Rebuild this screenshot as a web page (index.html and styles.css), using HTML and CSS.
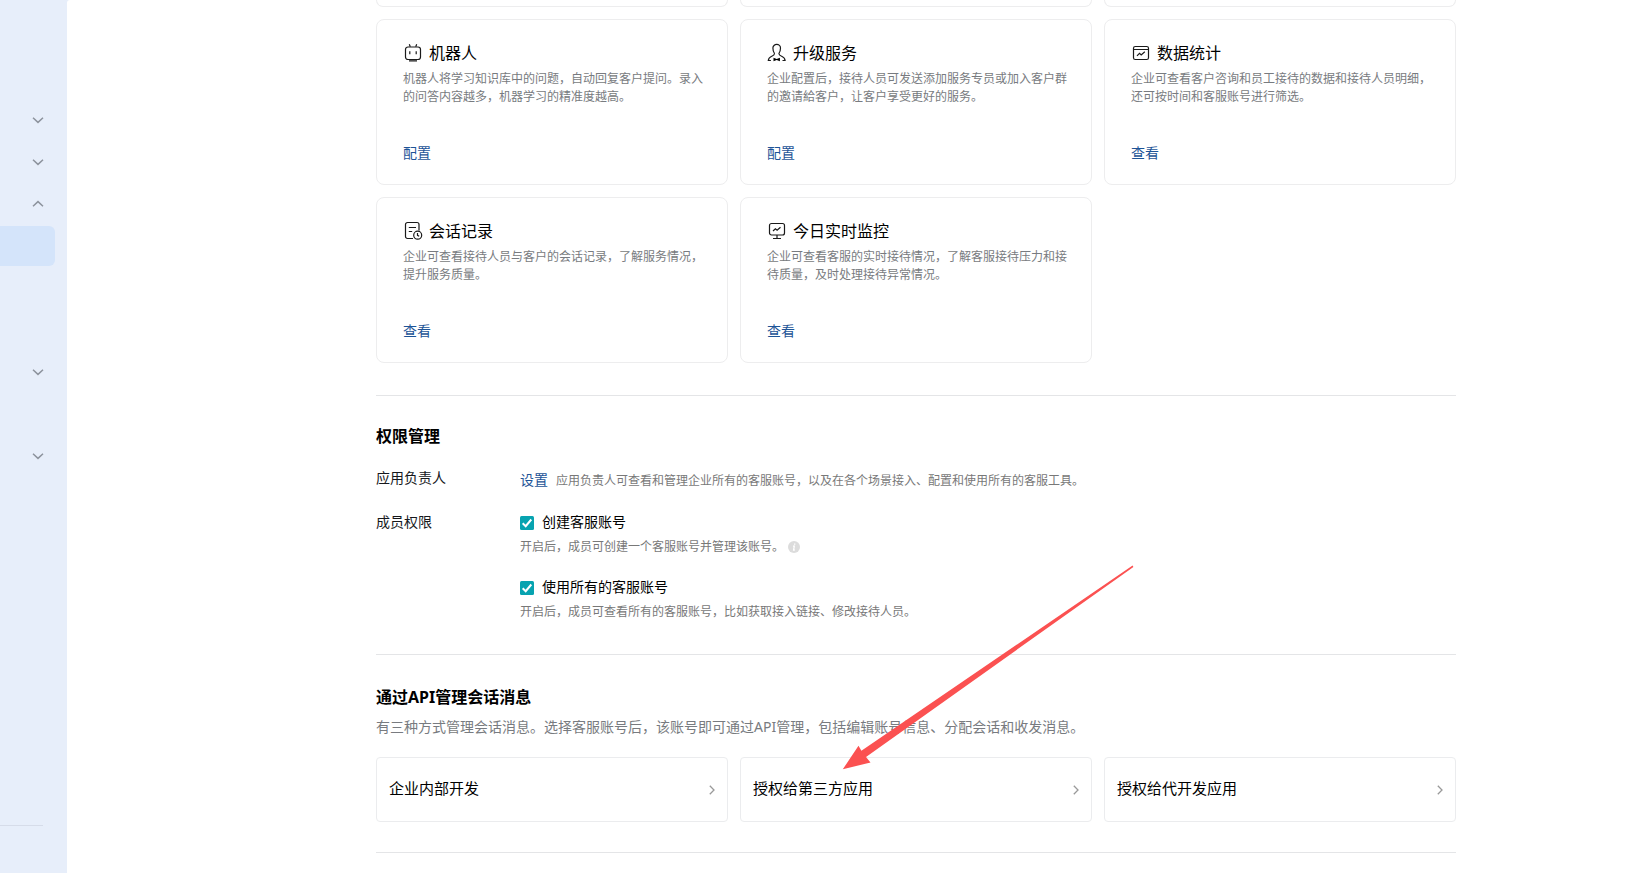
FILE: index.html
```
<!DOCTYPE html>
<html lang="zh-CN">
	<head>
		<meta charset="UTF-8" />
		<meta name="viewport" content="width=device-width, initial-scale=1.0" />
		<title>微信客服</title>
		<link rel="stylesheet" href="styles.css">
	</head>

	<body>
		<div class="layout">
			<aside class="sidebar">
				<ul class="menu">
					<li class="menu-item"><svg class="arrow" viewBox="0 0 12 12"><path d="M1 3.800l5 4.600 5-4.600" /></svg></li>
					<li class="menu-item"><svg class="arrow" viewBox="0 0 12 12"><path d="M1 3.800l5 4.600 5-4.600" /></svg></li>
					<li class="menu-item"><svg class="arrow" viewBox="0 0 12 12"><path d="M1 8.200l5-4.600 5 4.600" /></svg></li>
					<li class="menu-item active"></li>
					<li class="menu-item"></li>
					<li class="menu-item"></li>
					<li class="menu-item"><svg class="arrow" viewBox="0 0 12 12"><path d="M1 3.800l5 4.600 5-4.600" /></svg></li>
					<li class="menu-item"></li>
					<li class="menu-item"><svg class="arrow" viewBox="0 0 12 12"><path d="M1 3.800l5 4.600 5-4.600" /></svg></li>
				</ul>
				<div class="sidebar-line"></div>
			</aside>

			<main class="main">
				<div class="content">
					<div class="cards">
						<div class="card card-cut"></div>
						<div class="card card-cut"></div>
						<div class="card card-cut"></div>

						<div class="card">
							<h3 class="card-title">
								<svg class="icon" viewBox="0 0 20 20">
									<rect x="2.5" y="5" width="15" height="12.5" rx="2.5" />
									<path d="M6.3 2.2l1 2.6M13.7 2.2l-1 2.6M6.8 9.3v3M13.2 9.3v3M6 18.9h8" />
								</svg>
								机器人
							</h3>
							<p class="card-desc">机器人将学习知识库中的问题，自动回复客户提问。录入<br>的问答内容越多，机器学习的精准度越高。</p>
							<a class="link">配置</a>
						</div>
						<div class="card">
							<h3 class="card-title">
								<svg class="icon" viewBox="0 0 20 20">
									<path d="M7.500 11.500C6.400 10 5.900 8 5.900 6a3.800 3.600 0 0 1 7.600 0c0 2-.5 4-1.600 5.500 0 1.600 1 2 2.800 2.800 2 .9 3.200 1.700 3.400 4.200h-2.600M7.500 11.500c0 1.600-1 2-2.800 2.800-2 .9-3.200 1.700-3.400 4.200h2.600" />
									<path class="solid" d="M6.500 15.800l3.200 1.300 3.200-1.300v3.400l-3.200-1.300-3.200 1.300z" />
								</svg>
								升级服务
							</h3>
							<p class="card-desc">企业配置后，接待人员可发送添加服务专员或加入客户群<br>的邀请給客户，让客户享受更好的服务。</p>
							<a class="link">配置</a>
						</div>
						<div class="card">
							<h3 class="card-title">
								<svg class="icon" viewBox="0 0 20 20">
									<rect x="2.500" y="4.500" width="15" height="13" rx="1.800" />
									<path d="M2.500 7.500h15M6 13.800l2.500-2.500 1.700 1.700 3.600-3.200" />
								</svg>
								数据统计
							</h3>
							<p class="card-desc">企业可查看客户咨询和员工接待的数据和接待人员明细，<br>还可按时间和客服账号进行筛选。</p>
							<a class="link">查看</a>
						</div>

						<div class="card">
							<h3 class="card-title">
								<svg class="icon" viewBox="0 0 20 20">
									<path d="M10 18.500H4.500a2 2 0 0 1-2-2v-12a2 2 0 0 1 2-2h9.500a2 2 0 0 1 2 2v6M5.800 7.500h7.200M5.800 11.500h3.400" />
									<circle cx="14.700" cy="15.200" r="4" />
									<path d="M14.500 13v2.400l1.700.8" />
								</svg>
								会话记录
							</h3>
							<p class="card-desc">企业可查看接待人员与客户的会话记录，了解服务情况，<br>提升服务质量。</p>
							<a class="link">查看</a>
						</div>
						<div class="card">
							<h3 class="card-title">
								<svg class="icon" viewBox="0 0 20 20">
									<rect x="2.500" y="3.500" width="15" height="11.500" rx="2" />
									<path d="M6 11l2.400-2.200 1.700 1.500 3.400-3M10 15v3.500M6 18.500h8" />
								</svg>
								今日实时监控
							</h3>
							<p class="card-desc">企业可查看客服的实时接待情况，了解客服接待压力和接<br>待质量，及时处理接待异常情况。</p>
							<a class="link">查看</a>
						</div>
					</div>

					<section class="section">
						<h2 class="section-title">权限管理</h2>
						<div class="row row-owner">
							<div class="label">应用负责人</div>
							<div class="value owner">
								<a class="link">设置</a>
								<span class="tip">应用负责人可查看和管理企业所有的客服账号，以及在各个场景接入、配置和使用所有的客服工具。</span>
							</div>
						</div>
						<div class="row">
							<div class="label">成员权限</div>
							<div class="value">
								<div class="check">
									<svg class="checkbox" viewBox="0 0 14 14"><rect width="14" height="14" rx="1.500" /><path d="M2.700 7.200l3 3 5.600-6.700" /></svg>
									<span>创建客服账号</span>
								</div>
								<div class="tip check-tip">
									开启后，成员可创建一个客服账号并管理该账号。
									<svg class="info" viewBox="0 0 12 12"><circle cx="6" cy="6" r="6" /><path d="M5 5.200h1.300L5.600 9h1.200M6.700 2.600v1.100" /></svg>
								</div>
								<div class="check">
									<svg class="checkbox" viewBox="0 0 14 14"><rect width="14" height="14" rx="1.500" /><path d="M2.700 7.200l3 3 5.600-6.700" /></svg>
									<span>使用所有的客服账号</span>
								</div>
								<div class="tip check-tip">开启后，成员可查看所有的客服账号，比如获取接入链接、修改接待人员。</div>
							</div>
						</div>
					</section>

					<section class="section section-api">
						<h2 class="section-title">通过API管理会话消息</h2>
						<p class="section-desc">有三种方式管理会话消息。选择客服账号后，该账号即可通过API管理，包括编辑账号信息、分配会话和收发消息。</p>
						<div class="entries">
							<a class="entry"><span>企业内部开发</span><svg class="entry-arrow" viewBox="0 0 6 10"><path d="M.8.800L5 5 .8 9.200" /></svg></a>
							<a class="entry"><span>授权给第三方应用</span><svg class="entry-arrow" viewBox="0 0 6 10"><path d="M.8.800L5 5 .8 9.200" /></svg></a>
							<a class="entry"><span>授权给代开发应用</span><svg class="entry-arrow" viewBox="0 0 6 10"><path d="M.8.800L5 5 .8 9.200" /></svg></a>
						</div>
					</section>
					<div class="section section-next"></div>
				</div>
			</main>
		</div>

		<!-- red pointer over the third-party entry -->
		<svg class="pointer" viewBox="0 0 292 205">
			<path d="M.8 204.300L16.500 180.800l2.900 5L290.600.6l.8 1.300L24 192l4.500 5.600z" />
		</svg>
	</body>
</html>
```
FILE: styles.css
```
* {
	box-sizing: border-box;
}

body {
	margin: 0;
	height: 100vh;
	overflow: hidden;
	background: #e7eefa;
	font-family: "Noto Sans", "Noto Sans CJK SC", sans-serif;
	font-size: 14px;
	color: #000;
}

h2,
h3,
p,
ul {
	margin: 0;
	padding: 0;
}

svg {
	display: block;
	flex: none;
	fill: none;
}

.layout {
	display: flex;
	height: 100vh;
}

/* Sidebar */
.sidebar {
	width: 67px;
	flex: none;
	display: flex;
	flex-direction: column;
	justify-content: space-between;
	padding: 100px 12px 47px 0;
}

.menu {
	list-style: none;
	display: flex;
	flex-direction: column;
	gap: 2px;
}

.menu-item {
	height: 40px;
	display: flex;
	align-items: center;
	justify-content: flex-end;
	padding-right: 11px;
	border-radius: 0 6px 6px 0;
}

.menu-item.active {
	background: #d4e4fa;
}

.arrow {
	width: 12px;
	height: 12px;
	stroke: #8d939d;
	stroke-width: 1.5;
}

.sidebar-line {
	width: 43px;
	height: 1px;
	background: #d6dce9;
}

/* Main */
.main {
	flex: 1;
	background: #fff;
	border-radius: 3px 0 0 0;
	overflow: hidden;
}

.content {
	width: 1080px;
	margin-left: 309px;
}

.cards,
.entries {
	display: grid;
	grid-template-columns: repeat(3, 1fr);
	gap: 12px;
}

.card {
	height: 166px;
	padding: 20px 20px 0 26px;
	border: 1px solid #ededee;
	border-radius: 8px;
}

/* bottom edge of the row above */
.card-cut {
	height: 7px;
	padding: 0;
	border-top: none;
	border-radius: 0 0 8px 8px;
}

.card-title {
	display: flex;
	align-items: center;
	gap: 6px;
	height: 24px;
	font-size: 16px;
	font-weight: 400;
}

.icon {
	width: 20px;
	height: 20px;
	stroke: #1a1a1a;
	stroke-width: 1.2;
}

.icon .solid {
	fill: #000;
	stroke: none;
}

.card-desc {
	margin-top: 6px;
	font-size: 12px;
	line-height: 18px;
	color: #787b80;
	white-space: nowrap;
}

.link {
	font-size: 14px;
	line-height: 20px;
	color: #1d5497;
}

.card .link {
	display: block;
	margin-top: 37px;
}

.section {
	margin-top: 32px;
	padding-top: 28px;
	border-top: 1px solid #e4e5e7;
}

.section-title {
	font-size: 16px;
	line-height: 24px;
	font-weight: 700;
}

.row {
	display: flex;
	line-height: 20px;
}

.row-owner {
	margin-top: 20px;
	margin-bottom: 22px;
}

.label {
	width: 144px;
	color: #16181c;
}

.owner {
	display: flex;
	align-items: center;
	gap: 8px;
	padding-top: 2px;
}

.tip {
	font-size: 12px;
	line-height: 18px;
	color: #787878;
}

.owner .tip {
	padding-top: 1px;
}

.check {
	display: flex;
	align-items: center;
	gap: 8px;
	height: 22px;
}

.check span {
	padding-bottom: 2px;
}

.checkbox {
	width: 14px;
	height: 14px;
}

.checkbox rect {
	fill: #07a3b0;
}

.checkbox path {
	stroke: #fff;
	stroke-width: 2;
}

.check-tip {
	display: flex;
	align-items: center;
	gap: 4px;
	margin-top: 4px;
	margin-bottom: 21px;
}

.check-tip:last-child {
	margin-bottom: 1px;
}

.info {
	width: 12px;
	height: 12px;
}

.info circle {
	fill: #dcdcdc;
}

.info path {
	stroke: #fff;
	stroke-width: 1.3;
}

.section-api {
	padding-top: 30px;
}

.section-desc {
	margin-top: 8px;
	line-height: 20px;
	color: #787b80;
}

.entries {
	margin-top: 20px;
}

.entry {
	display: flex;
	align-items: center;
	justify-content: space-between;
	height: 65px;
	padding: 0 12px;
	border: 1px solid #ebecee;
	border-radius: 4px;
	font-size: 15px;
}

.entry span {
	padding-bottom: 4px;
}

.entry-arrow {
	width: 6px;
	height: 10px;
	stroke: #999;
	stroke-width: 1.3;
}

.section-next {
	margin-top: 30px;
}

.pointer {
	position: absolute;
	left: 842px;
	top: 565px;
	width: 292px;
	height: 205px;
	fill: #fb5151;
	pointer-events: none;
}
```
